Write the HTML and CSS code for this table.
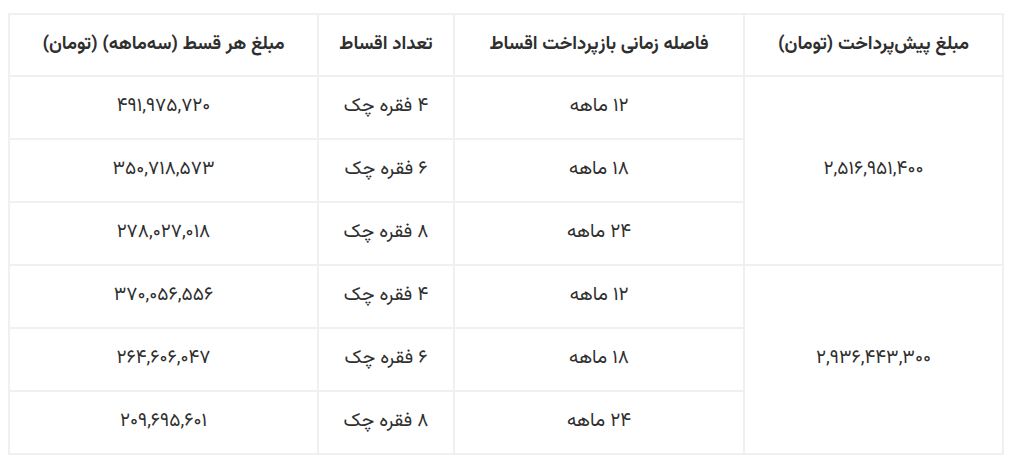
FILE: index.html
```html
<!DOCTYPE html>
<html lang="fa" dir="rtl">
<head>
<meta charset="utf-8">
<title>جدول اقساط</title>
<link rel="stylesheet" href="styles.css">
</head>
<body>
<div class="wrap">
<table class="plan">
<colgroup>
<col class="c1"><col class="c2"><col class="c3"><col class="c4">
</colgroup>
<thead>
<tr><th>مبلغ پیش‌پرداخت (تومان)</th><th>فاصله زمانی بازپرداخت اقساط</th><th>تعداد اقساط</th><th>مبلغ هر قسط (سه‌ماهه) (تومان)</th></tr>
</thead>
<tbody>
<tr><td rowspan="3">۲,۵۱۶,۹۵۱,۴۰۰</td><td>۱۲ ماهه</td><td>۴ فقره چک</td><td>۴۹۱,۹۷۵,۷۲۰</td></tr>
<tr><td>۱۸ ماهه</td><td>۶ فقره چک</td><td>۳۵۰,۷۱۸,۵۷۳</td></tr>
<tr><td>۲۴ ماهه</td><td>۸ فقره چک</td><td>۲۷۸,۰۲۷,۰۱۸</td></tr>
<tr><td rowspan="3">۲,۹۳۶,۴۴۳,۳۰۰</td><td>۱۲ ماهه</td><td>۴ فقره چک</td><td>۳۷۰,۰۵۶,۵۵۶</td></tr>
<tr><td>۱۸ ماهه</td><td>۶ فقره چک</td><td>۲۶۴,۶۰۶,۰۴۷</td></tr>
<tr><td>۲۴ ماهه</td><td>۸ فقره چک</td><td>۲۰۹,۶۹۵,۶۰۱</td></tr>
</tbody>
</table>
</div>
</body>
</html>
```
FILE: styles.css
```css
html, body { margin: 0; padding: 0; background: #fff; }
body { font-family: "Vazirmatn", "Noto Sans Arabic", "DejaVu Sans", sans-serif; color: #2f2f2f; }
.wrap { padding: 13px 20px 0 10px; }
.plan { width: 994px; border-collapse: collapse; table-layout: fixed; }
.c1 { width: 259px; }
.c2 { width: 290px; }
.c3 { width: 136px; }
.c4 { width: 309px; }
.plan th, .plan td { border: 2px solid #f0f0f0; text-align: center; vertical-align: middle; padding: 0 8px; line-height: 1.3; }
.plan th { height: 60px; font-size: 18.5px; font-weight: bold; }
.plan td { height: 61px; font-size: 19px; font-weight: normal; }
```
